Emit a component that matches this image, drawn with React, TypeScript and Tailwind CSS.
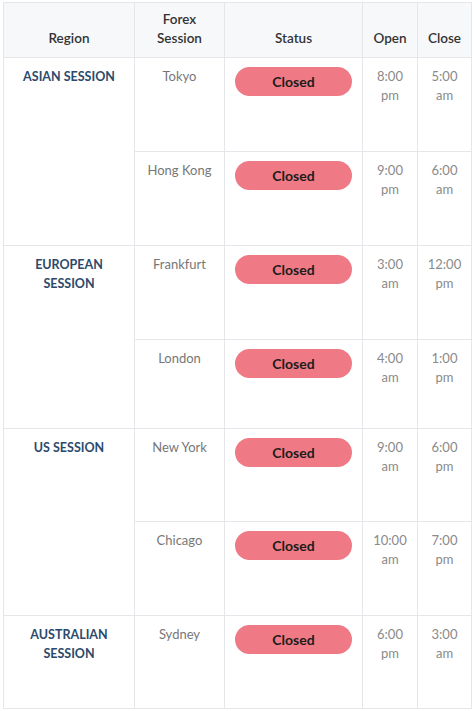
const rows = [
  { region: 'ASIAN SESSION', span: 2, city: 'Tokyo', open: ['8:00', 'pm'], close: ['5:00', 'am'], h: 'h-[94px]' },
  { city: 'Hong Kong', open: ['9:00', 'pm'], close: ['6:00', 'am'], h: 'h-[94px]' },
  { region: 'EUROPEAN SESSION', span: 2, city: 'Frankfurt', open: ['3:00', 'am'], close: ['12:00', 'pm'], h: 'h-[94px]' },
  { city: 'London', open: ['4:00', 'am'], close: ['1:00', 'pm'], h: 'h-[89px]' },
  { region: 'US SESSION', span: 2, city: 'New York', open: ['9:00', 'am'], close: ['6:00', 'pm'], h: 'h-[93px]' },
  { city: 'Chicago', open: ['10:00', 'am'], close: ['7:00', 'pm'], h: 'h-[94px]' },
  { region: 'AUSTRALIAN SESSION', span: 1, city: 'Sydney', open: ['6:00', 'pm'], close: ['3:00', 'am'], h: 'h-[93px]' },
];

function TimeCell({ value }: { value: string[] }) {
  return (
    <td className="border border-[#e4e6e9] align-top pt-[9px] text-center text-[13px] leading-[19px] text-[#8a8a8a]">
      {value[0]}
      <br />
      {value[1]}
    </td>
  );
}

export default function App() {
  return (
    <div className="w-[474px] h-[711px] bg-white pl-[3px] pt-[2px] font-['Lato',sans-serif]">
      <table className="w-[468px] table-fixed border-collapse">
        <colgroup>
          <col className="w-[131px]" />
          <col className="w-[90px]" />
          <col className="w-[138px]" />
          <col className="w-[55px]" />
          <col className="w-[54px]" />
        </colgroup>
        <thead>
          <tr className="h-[55px] bg-[#f7f8fa] text-[13.5px] leading-[19px] font-semibold text-[#333]">
            <th className="border border-[#e4e6e9] align-bottom pb-[9px] font-semibold">Region</th>
            <th className="border border-[#e4e6e9] align-bottom pb-[9px] font-semibold">
              Forex
              <br />
              Session
            </th>
            <th className="border border-[#e4e6e9] align-bottom pb-[9px] font-semibold">Status</th>
            <th className="border border-[#e4e6e9] align-bottom pb-[9px] font-semibold">Open</th>
            <th className="border border-[#e4e6e9] align-bottom pb-[9px] font-semibold">Close</th>
          </tr>
        </thead>
        <tbody>
          {rows.map((r) => (
            <tr key={r.city} className={r.h}>
              {r.region && (
                <td
                  rowSpan={r.span}
                  className="border border-[#e4e6e9] align-top pt-[9px] px-4 text-center text-[12.5px] leading-[19px] font-bold text-[#2b4a6b]"
                >
                  {r.region}
                </td>
              )}
              <td className="border border-[#e4e6e9] align-top pt-[9px] text-center text-[13px] leading-[19px] text-[#777]">
                {r.city}
              </td>
              <td className="border border-[#e4e6e9] align-top pt-[9px]">
                <div className="mx-auto flex h-[29px] w-[117px] items-center justify-center rounded-full bg-[#ef7a85] text-[14px] font-bold text-[#1c1c1c]">
                  Closed
                </div>
              </td>
              <TimeCell value={r.open} />
              <TimeCell value={r.close} />
            </tr>
          ))}
        </tbody>
      </table>
    </div>
  );
}
